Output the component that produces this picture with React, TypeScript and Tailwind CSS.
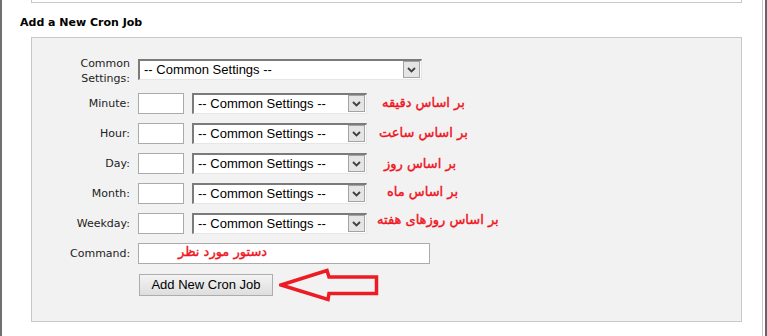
import React from 'react';

const SelectBox = ({ className }: { className: string }) => (
  <div
    className={`relative h-[21px] bg-white border-t-2 border-l-2 border-[#7b7b7b] border-r border-b border-r-[#e6e6e6] border-b-[#e6e6e6] ${className}`}
  >
    <span className="absolute left-[4px] top-[1px] text-[13px] leading-[16px] text-black whitespace-nowrap font-['Liberation_Sans',Arial,sans-serif]">
      -- Common Settings --
    </span>
    <span className="absolute right-[1px] top-0 bottom-[1px] w-[17px] bg-[#e5e5e5] border border-[#a3a3a3] flex items-center justify-center">
      <svg width="9" height="6" viewBox="0 0 9 6">
        <polyline points="1,1 4.5,4.5 8,1" fill="none" stroke="#404040" strokeWidth="1.8" />
      </svg>
    </span>
  </div>
);

// red hand-written annotations; fixed height so they never push the rows
const Note = ({ text, className }: { text: string; className: string }) => (
  <span
    dir="rtl"
    className={`h-[16px] text-[13px] leading-[16px] text-[#f0141e] [-webkit-text-stroke:0.4px_#f0141e] whitespace-nowrap font-['DejaVu_Sans',sans-serif] ${className}`}
  >
    {text}
  </span>
);

const rows = [
  { label: 'Minute:', note: 'بر اساس دقیقه', noteClass: 'relative ml-[7px] -top-[1px]' },
  { label: 'Hour:', note: 'بر اساس ساعت', noteClass: 'relative ml-[4px] -top-[1px]' },
  { label: 'Day:', note: 'بر اساس روز', noteClass: 'relative ml-[9px] top-0' },
  { label: 'Month:', note: 'بر اساس ماه', noteClass: 'relative ml-[12px] -top-[2px]' },
  { label: 'Weekday:', note: 'بر اساس روزهای هفته', noteClass: 'relative ml-[2px] -top-[4px]' },
];

export default function App() {
  return (
    <div className="w-[767px] h-[336px] bg-white flex overflow-hidden font-['DejaVu_Sans',Verdana,sans-serif]">
      <div className="w-[2px] bg-[#707070] shrink-0" />

      <div className="w-[760px] shrink-0">
        {/* previous box edge */}
        <div className="ml-[29px] w-[711px] h-[3px] border-x border-b border-[#c8c8c8]" />

        <h2 className="ml-[18px] mt-[13px] mb-[7px] text-[11px] leading-[14px] font-bold text-black">
          Add a New Cron Job
        </h2>

        {/* form panel */}
        <div className="ml-[29px] w-[711px] border border-[#c8c8c8] bg-[#f2f2f2] pl-[38px] pt-[18px] pb-[19px]">
          <div className="flex items-start gap-[8px]">
            <div className="w-[60px] text-right text-[11px] leading-[15px] text-[#222]">
              Common
              <br />
              Settings:
            </div>
            <SelectBox className="w-[284px] mt-[3px]" />
          </div>

          {rows.map((row, i) => (
            <div key={row.label} className={`flex items-center h-[21px] gap-[8px] ${i === 0 ? 'mt-[7px]' : 'mt-[9px]'}`}>
              <div className="w-[60px] text-right text-[11px] leading-[15px] text-[#222]">{row.label}</div>
              <input className="w-[46px] h-[21px] border border-[#ababab] bg-white outline-none" />
              <SelectBox className="w-[175px]" />
              <Note text={row.note} className={row.noteClass} />
            </div>
          ))}

          <div className="flex items-center h-[21px] gap-[8px] mt-[9px]">
            <div className="w-[60px] text-right text-[11px] leading-[15px] text-[#222]">Command:</div>
            <div className="relative">
              <input className="w-[292px] h-[21px] border border-[#ababab] bg-white outline-none" />
              <Note text="دستور مورد نظر" className="absolute left-[40px] top-[2px]" />
            </div>
          </div>

          <div className="flex items-center h-[34px] mt-[4px] ml-[69px]">
            <button className="w-[134px] h-[22px] border border-[#adadad] bg-gradient-to-b from-[#f3f3f3] to-[#dedede] text-[13px] leading-[16px] text-black font-['Liberation_Sans',Arial,sans-serif]">
              Add New Cron Job
            </button>
            <svg width="100" height="34" viewBox="0 0 100 34" className="ml-[6px]">
              <polygon
                points="2,17 48,2.5 50,9 97.5,9 97.5,25.5 50,25.5 49,31.5"
                fill="none"
                stroke="#ed1c24"
                strokeWidth="3.5"
                strokeLinejoin="miter"
              />
            </svg>
          </div>
        </div>
      </div>

      <div className="w-[1px] bg-[#c8c8c8] shrink-0" />
      <div className="w-[2px] shrink-0" />
      <div className="w-[2px] bg-[#666666] shrink-0" />
    </div>
  );
}
